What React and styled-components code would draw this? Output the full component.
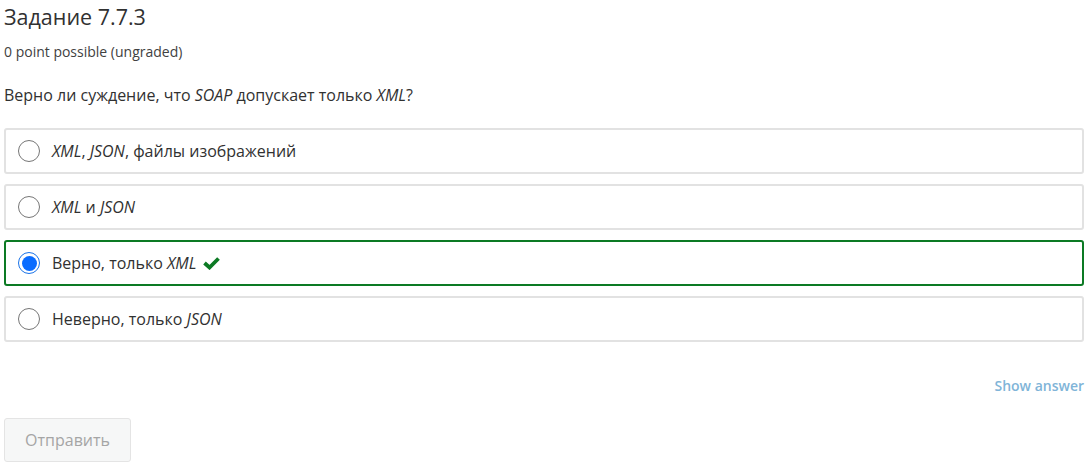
import React from "react";
import styled, { createGlobalStyle } from "styled-components";

const GlobalStyle = createGlobalStyle`
  body {
    margin: 0;
    background: #fff;
    font-family: "Open Sans", "Noto Sans", sans-serif;
    color: #313131;
  }
`;

const Problem = styled.div`
  padding: 0 6px 0 4px;
`;

const Title = styled.h3`
  margin: 0;
  padding-top: 4px;
  font-size: 21.5px;
  font-weight: 400;
  line-height: 26px;
  color: #313131;
`;

const Points = styled.div`
  margin-top: 12px;
  font-size: 14px;
  line-height: 20px;
  color: #414141;
`;

const Question = styled.p`
  margin: 21px 0 0;
  font-size: 16px;
  line-height: 24px;
  color: #313131;
`;

const Choices = styled.div`
  display: flex;
  flex-direction: column;
  gap: 10px;
  margin-top: 21px;
`;

const Choice = styled.label`
  display: flex;
  align-items: center;
  gap: 12px;
  height: 46px;
  box-sizing: border-box;
  padding: 0 12px;
  border: 2px solid ${(p) => (p.$correct ? "#0c7a24" : "#e2e2e2")};
  border-radius: 3px;
  font-size: 16px;
  color: #313131;
`;

const Radio = styled.span`
  width: 22px;
  height: 22px;
  box-sizing: border-box;
  border-radius: 50%;
  border: 1px solid ${(p) => (p.$checked ? "#1a73e8" : "#767676")};
  display: flex;
  align-items: center;
  justify-content: center;
  flex-shrink: 0;

  &::after {
    content: "";
    display: ${(p) => (p.$checked ? "block" : "none")};
    width: 15px;
    height: 15px;
    border-radius: 50%;
    background: #0a6cff;
  }
`;

const Check = styled.svg`
  width: 17px;
  height: 14px;
  margin-left: 7px;
  vertical-align: -1px;
`;

const Actions = styled.div`
  display: flex;
  justify-content: flex-end;
  margin-top: 34px;
  line-height: 20px;
`;

const ShowAnswer = styled.a`
  font-size: 14px;
  font-weight: 600;
  color: #80b4d8;
  text-decoration: none;
`;

const Submit = styled.button`
  display: block;
  margin-top: 22px;
  width: 127px;
  height: 44px;
  border: 1px solid #e4e4e4;
  border-radius: 3px;
  background: #f6f7f7;
  color: #a5a5a5;
  font-family: "Open Sans", sans-serif;
  font-size: 16px;
`;

const options = [
  { id: 1, label: <><i>XML</i>, <i>JSON</i>, файлы изображений</> },
  { id: 2, label: <><i>XML</i> и <i>JSON</i></> },
  { id: 3, label: <>Верно, только <i>XML</i></>, checked: true },
  { id: 4, label: <>Неверно, только <i>JSON</i></> },
];

const App = () => (
  <>
    <GlobalStyle />
    <Problem>
      <Title>Задание 7.7.3</Title>
      <Points>0 point possible (ungraded)</Points>
      <Question>
        Верно ли суждение, что <i>SOAP</i> допускает только <i>XML</i>?
      </Question>
      <Choices>
        {options.map((o) => (
          <Choice key={o.id} $correct={o.checked}>
            <Radio $checked={o.checked} />
            <span>
              {o.label}
              {o.checked && (
                <Check viewBox="0 0 17 14">
                  <path
                    d="M1.5 7 L6.5 11.5 L15.5 2.5"
                    fill="none"
                    stroke="#0c7a24"
                    strokeWidth="3.8"
                    strokeLinejoin="miter"
                  />
                </Check>
              )}
            </span>
          </Choice>
        ))}
      </Choices>
      <Actions>
        <ShowAnswer href="#">Show answer</ShowAnswer>
      </Actions>
      <Submit>Отправить</Submit>
    </Problem>
  </>
);

export default App;
